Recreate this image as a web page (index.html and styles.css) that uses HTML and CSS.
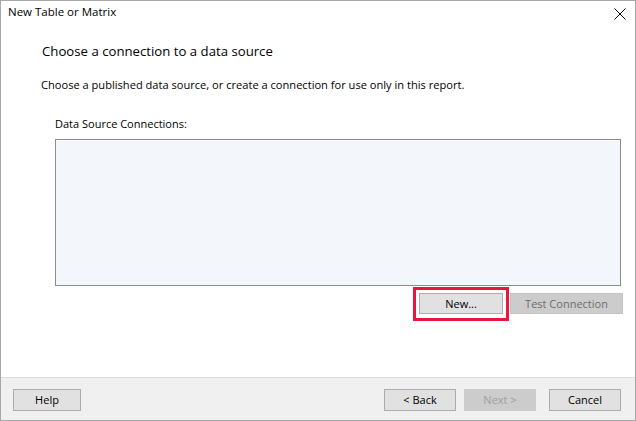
FILE: index.html
```html
<!DOCTYPE html>
<html>
<head>
<meta charset="utf-8">
<link rel="stylesheet" href="styles.css">
</head>
<body>
<div class="window">
  <div class="titlebar">
    <span class="title">New Table or Matrix</span>
    <svg class="close" width="12" height="12" viewBox="0 0 12 12"><path d="M0.5 0.5 L11.5 11.5 M11.5 0.5 L0.5 11.5" stroke="#000" stroke-width="1" fill="none"/></svg>
  </div>
  <div class="content">
    <h1 class="heading">Choose a connection to a data source</h1>
    <p class="desc">Choose a published data source, or create a connection for use only in this report.</p>
    <div class="group">
      <div class="label">Data Source Connections:</div>
      <div class="listbox"></div>
      <div class="actions">
        <button class="btn btn-new">New...<span class="highlight"></span></button>
        <button class="btn btn-test" disabled>Test Connection</button>
      </div>
    </div>
  </div>
  <div class="footer">
    <button class="btn fbtn help">Help</button>
    <div class="spacer"></div>
    <button class="btn fbtn">&lt; Back</button>
    <button class="btn fbtn" disabled>Next &gt;</button>
    <button class="btn fbtn cancel">Cancel</button>
  </div>
</div>
</body>
</html>
```
FILE: styles.css
```css
html, body {
  margin: 0;
  padding: 0;
  background: #fff;
}
.window {
  width: 636px;
  height: 421px;
  box-sizing: border-box;
  border: 1px solid #a8a8a8;
  background: #fff;
  display: flex;
  flex-direction: column;
  font-family: "Segoe UI", "Open Sans", "Noto Sans", sans-serif;
  font-size: 11px;
  color: #000;
}
.titlebar {
  height: 29px;
  display: flex;
  align-items: flex-start;
  justify-content: space-between;
  padding: 3px 9px 0 7px;
  box-sizing: border-box;
}
.title {
  font-size: 11.5px;
  line-height: 16px;
}
.close {
  margin-top: 4px;
  display: block;
}
.content {
  flex: 1;
  padding: 11px 0 0 41px;
}
.heading {
  margin: 0;
  font-weight: normal;
  font-size: 13.2px;
  line-height: 20px;
}
.desc {
  margin: 16px 0 0 -1px;
  font-size: 11.1px;
  line-height: 16px;
}
.group {
  margin: 23px 0 0 13px;
  width: 568px;
}
.label {
  line-height: 16px;
}
.listbox {
  margin-top: 7px;
  width: 566px;
  height: 147px;
  box-sizing: border-box;
  border: 1px solid #8c8c8c;
  background: #f3f6fb;
}
.actions {
  display: flex;
  justify-content: flex-end;
  gap: 7px;
  margin-top: 7px;
}
.btn {
  font-family: inherit;
  font-size: 11px;
  color: #000;
  background: #e1e1e1;
  border: 1px solid #adadad;
  box-sizing: border-box;
  padding: 0;
  margin: 0;
  line-height: 14px;
}
.btn-new {
  position: relative;
  width: 84px;
  height: 21px;
}
.highlight {
  position: absolute;
  left: -7px;
  top: -7px;
  right: -7px;
  bottom: -8px;
  border: 3px solid #e8173c;
}
.btn-test {
  width: 113px;
  height: 21px;
  background: #cccccc;
  border-color: #c4c4c4;
  color: #6d6d6d;
}
.footer {
  height: 43px;
  box-sizing: border-box;
  border-top: 1px solid #dcdcdc;
  background: #f0f0f0;
  display: flex;
  align-items: flex-start;
  padding: 11px 14px 0 12px;
  gap: 8px;
}
.spacer {
  flex: 1;
}
.fbtn {
  width: 72px;
  height: 22px;
}
.help {
  width: 68px;
}
.fbtn[disabled] {
  background: #cccccc;
  border-color: #cccccc;
  color: #a0a0a0;
}
.cancel {
  margin-left: 5px;
}
```
